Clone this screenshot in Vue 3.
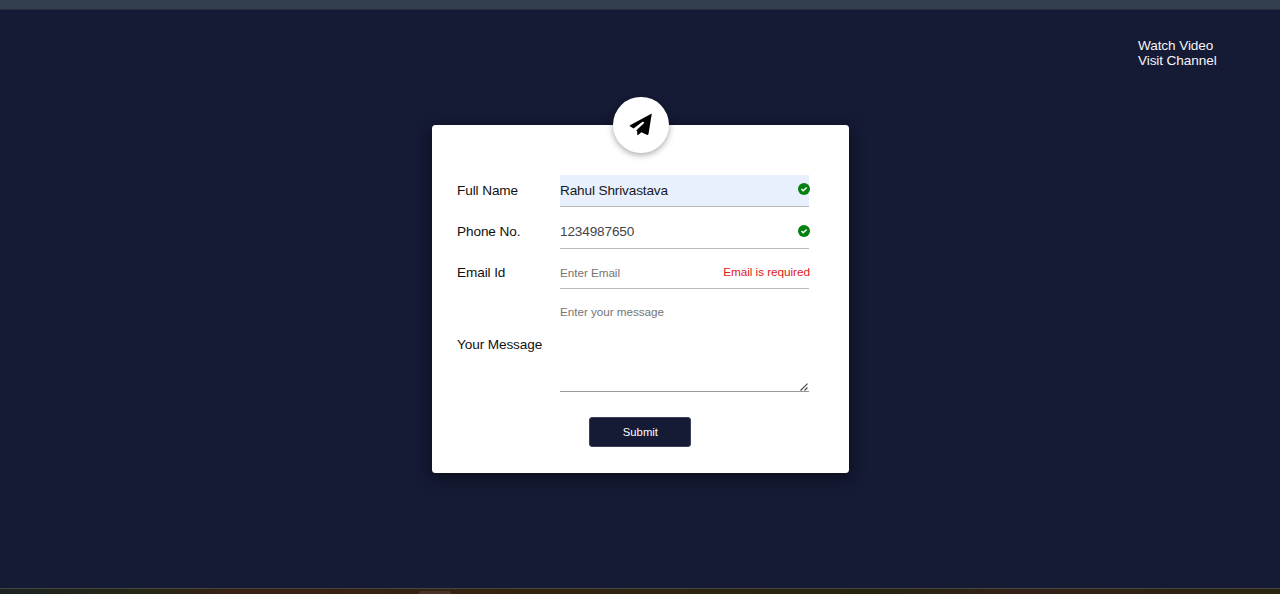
<script setup>
const fields = [
  { id: 'name', label: 'Full Name', value: 'Rahul Shrivastava', placeholder: 'Enter Name', filled: true, valid: true },
  { id: 'phone', label: 'Phone No.', value: '1234987650', placeholder: 'Enter Phone', valid: true },
  { id: 'email', label: 'Email Id', value: '', placeholder: 'Enter Email', error: 'Email is required' },
]
</script>

<template>
  <div class="page">
    <div class="topbar"></div>
    <nav class="links">
      <a>Watch Video</a>
      <a>Visit Channel</a>
    </nav>
    <form class="card" @submit.prevent>
      <div class="badge">
        <svg width="24" height="24" viewBox="0 0 24 24">
          <path d="M22.8 .4 1 12.2Q.4 12.8 1 13.3L4.5 15.4 13.9 8.6 15.4 9.8 7.2 17.4 8.2 18.2V21.4Q8.4 22.4 9.3 21.7L12.4 19.2 17.8 21.8Q18.9 22.2 19.5 20.9Z" />
        </svg>
      </div>
      <div v-for="f in fields" :key="f.id" class="row" :class="f.id">
        <label :for="f.id">{{ f.label }}</label>
        <div class="control">
          <input :id="f.id" :class="{ filled: f.filled }" :value="f.value" :placeholder="f.placeholder" />
          <svg v-if="f.valid" class="check" width="12" height="12" viewBox="0 0 12 12">
            <circle cx="6" cy="6" r="6" fill="#048010" />
            <path d="M3.4 6.1 5.2 7.8 8.7 4.4" fill="none" stroke="#fff" stroke-width="1.4" />
          </svg>
          <span v-if="f.error" class="error">{{ f.error }}</span>
        </div>
      </div>
      <div class="row message">
        <label for="message">Your Message</label>
        <div class="control">
          <textarea id="message" placeholder="Enter your message"></textarea>
          <svg class="grip" width="8" height="8" viewBox="0 0 8 8">
            <path d="M.5 7.5 7.5 .7M4.5 7.5 7.5 4.5" fill="none" stroke="#444" stroke-width="1.1" />
          </svg>
        </div>
      </div>
      <button>Submit</button>
    </form>
    <footer class="taskbar"><div class="tab"></div></footer>
  </div>
</template>

<style>
body {
  margin: 0;
  overflow: hidden;
}
</style>

<style scoped>
.page {
  position: relative;
  box-sizing: border-box;
  width: 1280px;
  height: 594px;
  display: flex;
  flex-direction: column;
  background: #151a35;
  font-family: "Liberation Sans", Arial, sans-serif;
  font-size: 13.6px;
  letter-spacing: -0.1px;
  color: #111;
}
.topbar {
  height: 9px;
  flex: none;
  background: #323e4c;
  border-bottom: 1px solid #232c40;
}
.links {
  display: flex;
  flex-direction: column;
  align-self: flex-end;
  width: 142px;
  margin-top: 28px;
  height: 31px;
  line-height: 15.4px;
  color: #f5f5f7;
}
.card {
  position: relative;
  box-sizing: border-box;
  align-self: center;
  width: 417px;
  height: 348.5px;
  margin: 55.5px 0 0 1px;
  padding: 50px 40px 0 25px;
  display: flex;
  flex-direction: column;
  background: #fff;
  border-radius: 3.5px;
  box-shadow: 0 4px 16px rgba(0, 0, 0, 0.5);
}
.badge {
  position: absolute;
  left: 181px;
  top: -27.5px;
  width: 55.5px;
  height: 55.5px;
  border-radius: 50%;
  background: #fff;
  box-shadow: 0 2px 6px rgba(0, 0, 0, 0.35);
}
.badge svg {
  display: block;
  margin: 16px 0 0 16px;
}
.row {
  display: flex;
  align-items: center;
  height: 32.5px;
  margin-bottom: 9px;
}
.row.phone {
  margin-bottom: 8px;
}
.row.email {
  margin-bottom: 0;
}
.row label {
  width: 103px;
  flex: none;
  padding-bottom: 1px;
}
.control {
  position: relative;
  width: 249px;
  height: 100%;
}
input,
textarea {
  box-sizing: border-box;
  display: block;
  width: 100%;
  height: 100%;
  margin: 0;
  padding: 0;
  border: 0;
  border-bottom: 1px solid #b9b9bb;
  border-radius: 0;
  outline: 0;
  background: transparent;
  font: inherit;
  letter-spacing: -0.14px;
  color: #444;
  resize: none;
}
input.filled {
  background: #e8effd;
  color: #16191f;
}
#phone {
  padding-bottom: 1px;
}
input::placeholder,
textarea::placeholder {
  font-size: 11.7px;
  letter-spacing: -0.04px;
  color: #757575;
  opacity: 1;
}
.check {
  position: absolute;
  right: -1px;
  top: 8.5px;
}
.error {
  position: absolute;
  right: -1px;
  top: 8px;
  font-size: 11.8px;
  letter-spacing: -0.06px;
  line-height: 14px;
  color: #e0201c;
}
.row.message {
  height: 90px;
  margin-top: 12.5px;
  margin-bottom: 25px;
}
.message label {
  padding-bottom: 5px;
}
textarea {
  padding-top: 3px;
  font-size: 12px;
  border-color: #98989b;
}
.grip {
  position: absolute;
  right: 1px;
  bottom: 1px;
}
button {
  width: 102px;
  height: 30.5px;
  margin-left: 132.4px;
  padding: 0;
  border: 1px solid #3c405a;
  border-radius: 3px;
  background: #151a35;
  color: #fff;
  font: 11.3px "Liberation Sans", Arial, sans-serif;
}
.taskbar {
  margin-top: auto;
  box-sizing: border-box;
  height: 6px;
  border-top: 1px solid #45463f;
  background: linear-gradient(90deg, #1b2323, #272712 12%, #3a2016 18%, #35230f 40%, #25240f 68%, #352017 80%, #29240f);
}
.tab {
  width: 32px;
  height: 3px;
  margin: 2px 0 0 419px;
  background: #4a3226;
  border-radius: 2px 2px 0 0;
}
</style>
